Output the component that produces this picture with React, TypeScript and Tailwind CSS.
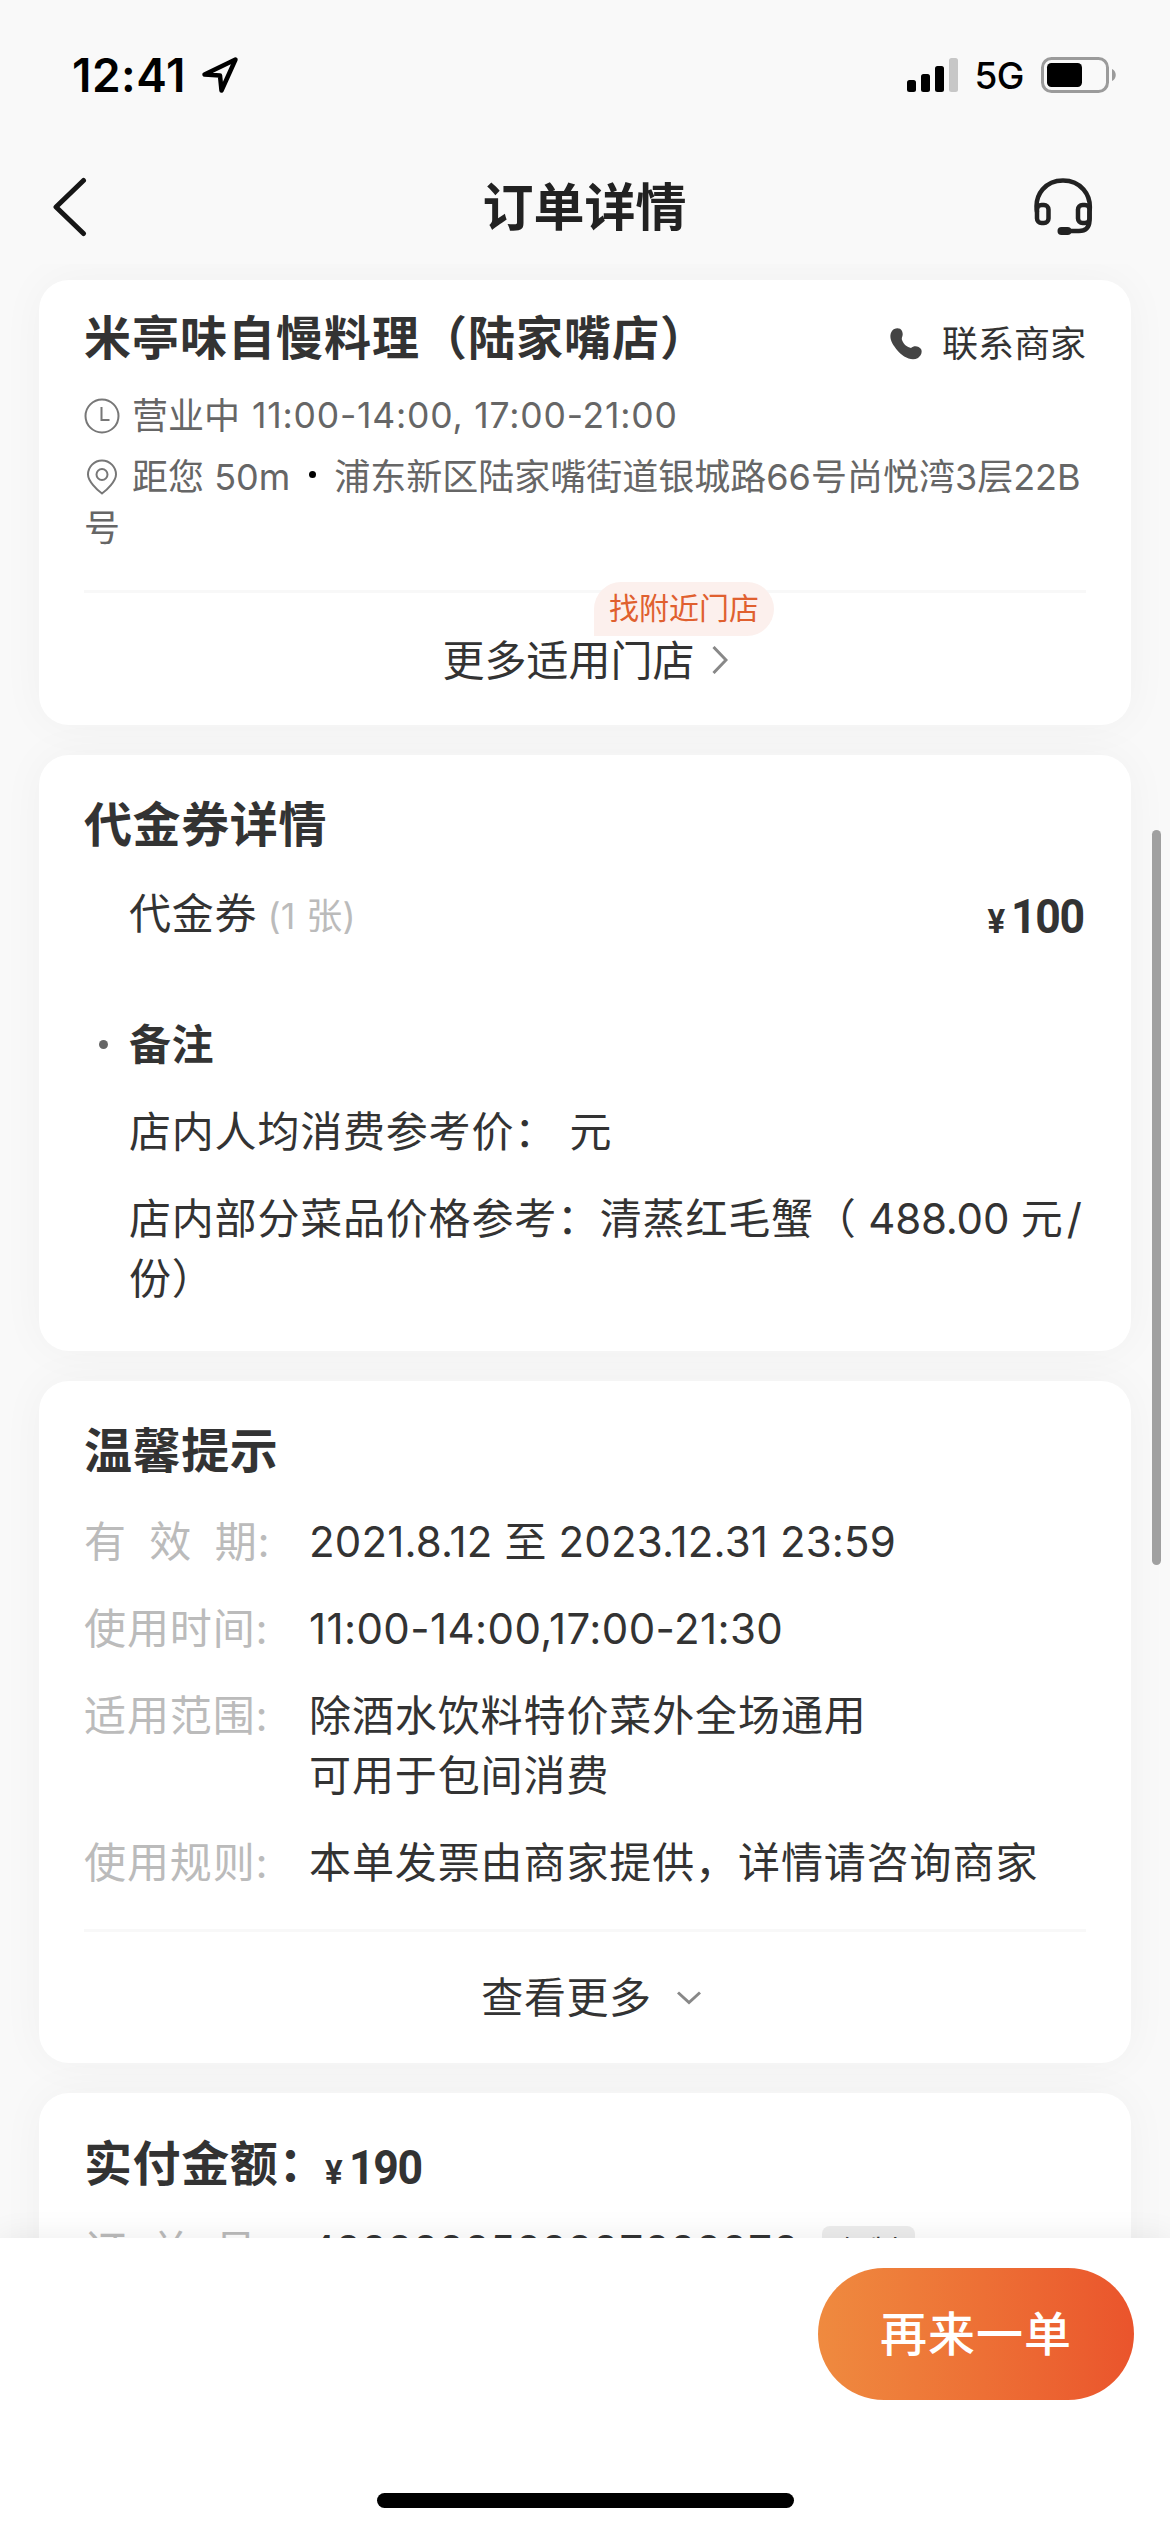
import type { ReactNode } from "react";

interface InfoRow {
  label: string;
  lines: string[];
  valueClass?: string;
}

const tips: InfoRow[] = [
  { label: "有  效  期:", lines: ["2021.8.12 至 2023.12.31 23:59"], valueClass: "tracking-[0.15px]" },
  { label: "使用时间:", lines: ["11:00-14:00,17:00-21:30"], valueClass: "tracking-[0.4px]" },
  { label: "适用范围:", lines: ["除酒水饮料特价菜外全场通用", "可用于包间消费"] },
  { label: "使用规则:", lines: ["本单发票由商家提供，详情请咨询商家"] },
];

function StatusBar() {
  return (
    <div className="flex h-[150px] items-center justify-between pl-[72px] pr-[53px] text-black">
      <div className="flex items-center gap-[15px]">
        <span className="text-[46px] font-semibold leading-none tracking-[0.5px]">12:41</span>
        <svg width="38" height="38" viewBox="0 0 38 38" fill="none" stroke="currentColor" strokeWidth="4.5" strokeLinejoin="round">
          <path d="M34.5 3.5 3.5 18.5 19 19.5 20.5 34.5Z" />
        </svg>
      </div>
      <div className="flex items-center">
        <svg width="52" height="34" viewBox="0 0 52 34">
          <rect x="0" y="22" width="9" height="12" rx="2.5" />
          <rect x="14" y="16" width="9" height="18" rx="2.5" />
          <rect x="28" y="8" width="9" height="26" rx="2.5" />
          <rect x="42" y="0" width="9" height="34" rx="2.5" fill="#c7c7c7" />
        </svg>
        <span className="ml-[15px] text-[37px] font-medium leading-none tracking-[-0.5px]">5G</span>
        <svg className="ml-[17px]" width="76" height="36" viewBox="0 0 76 36">
          <rect x="1.5" y="1.5" width="65" height="33" rx="9" fill="none" stroke="#9b9b9b" strokeWidth="3" />
          <rect x="6" y="6" width="35" height="24" rx="4.5" />
          <path d="M71 12c5 2 5 10 0 12z" fill="#9b9b9b" />
        </svg>
      </div>
    </div>
  );
}

function Header() {
  return (
    <div className="flex h-[114px] items-center justify-between pl-[52px] pr-[77px]">
      <svg width="36" height="60" viewBox="0 0 36 60" fill="none" stroke="#161616" strokeWidth="5" strokeLinecap="round" strokeLinejoin="round">
        <path d="M31.5 3.5 4 30 31.5 56.5" />
      </svg>
      <h1 className="ml-[48px] text-[51px] font-bold leading-none text-[#222]">订单详情</h1>
      <svg width="60" height="60" viewBox="0 0 60 60" fill="none" stroke="#222" strokeWidth="4.5">
        <path d="M4 35C1 17 13 3.5 30 3.5S59 17 56.5 35V44Q56 54 46 54H30" />
        <rect x="4" y="28" width="11.5" height="18" rx="4.5" />
        <rect x="45" y="28" width="11.5" height="18" rx="4.5" />
        <path d="M28.5 54h6" strokeWidth="8" strokeLinecap="round" />
      </svg>
    </div>
  );
}

function Card({ className, children }: { className?: string; children: ReactNode }) {
  return (
    <section className={`shrink-0 rounded-[30px] bg-white px-[45px] shadow-[0_0_45px_rgba(0,0,0,0.04)] ${className ?? ""}`}>
      {children}
    </section>
  );
}

function Price({ value }: { value: number }) {
  return (
    <span className="mt-[7px] flex items-baseline gap-[6px] font-['Roboto'] font-bold text-[#333]">
      <span className="text-[33px]">¥</span>
      <span className="-mr-[5px] inline-block origin-left scale-x-[0.91] text-[49px] tracking-[-1.5px]">{value}</span>
    </span>
  );
}

function StoreCard() {
  return (
    <Card className="h-[445px] pt-[29px]">
      <div className="flex items-start justify-between">
        <h2 className="text-[47px] font-bold leading-[58px] tracking-[1px] text-[#333]">米亭味自慢料理（陆家嘴店）</h2>
        <div className="mt-[11px] flex items-center gap-5 text-[#333]">
          <svg width="32" height="32" viewBox="0 0 32 32" fill="#444">
            <path d="M2 3C4 0 10-1 12 3 14 8 11 9 12 12 14 17 17 19 21 20 24 17 29 18 31 21 33 25 30 28 28 30 21 34 12 28 7 22 2 16-2 9 2 3Z" />
          </svg>
          <span className="text-[36px] leading-[48px]">联系商家</span>
        </div>
      </div>
      <div className="mt-[22px] flex h-[51px] items-center text-[36px] text-[#666]">
        <svg className="mr-3" width="36" height="36" viewBox="0 0 36 36" fill="none" stroke="#777" strokeWidth="2">
          <circle cx="18" cy="18" r="16.5" />
          <path d="M17.5 9v13h8" />
        </svg>
        <span>营业中</span>
        <span className="ml-[12px] text-[35.5px] tracking-[0.8px]">11:00-14:00, 17:00-21:00</span>
      </div>
      <p className="mt-[11px] text-[36px] leading-[51px] text-[#666]">
        <svg className="mr-3 inline-block align-[-5px]" width="36" height="36" viewBox="0 0 36 36" fill="none" stroke="#777" strokeWidth="2">
          <path d="M18 34.5C13 31 4 22 4 15.5a14 14 0 0 1 28 0C32 22 23 31 18 34.5Z" />
          <circle cx="18" cy="15.5" r="5.5" />
        </svg>
        距您 50m
        <span className="ml-[19px] mr-[18px] inline-block size-[7px] rounded-full bg-black align-[12px]" />
        浦东新区陆家嘴街道银城路66号尚悦湾3层22B号
      </p>
      <div className="relative mt-[36px] h-[134px] border-t-3 border-[#f8f8f8]">
        <div className="flex h-full items-center justify-center gap-[17px] pt-[3px]">
          <span className="text-[42px] text-[#333]">更多适用门店</span>
          <svg width="16" height="28" viewBox="0 0 16 28" fill="none" stroke="#888" strokeWidth="3">
            <path d="M1.5 1 14 14 1.5 27" />
          </svg>
        </div>
        <span className="absolute left-[510px] top-[-11px] flex h-[54px] w-[180px] items-center justify-center rounded-[27px] rounded-bl-none bg-[#fcf0ed] pb-[2px] text-[30px] text-[#e0602f]">
          找附近门店
        </span>
      </div>
    </Card>
  );
}

function VoucherCard() {
  return (
    <Card className="h-[596px] pt-[40px]">
      <h2 className="text-[48px] font-bold leading-[60px] tracking-[0.6px] text-[#333]">代金券详情</h2>
      <div className="mt-[28px] flex h-[60px] items-center justify-between pl-[45px]">
        <div className="text-[42px] tracking-[0.8px] text-[#333]">
          代金券
          <span className="ml-[10px] text-[36px] tracking-[0.3px] text-[#bbb]">(1 张)</span>
        </div>
        <Price value={100} />
      </div>
      <div className="mt-[71px] flex h-[60px] items-center">
        <span className="ml-[15px] size-[9px] rounded-full bg-[#666]" />
        <span className="ml-[21px] text-[42px] font-bold tracking-[0.6px] text-[#333]">备注</span>
      </div>
      <div className="mt-[28px] flex flex-col gap-[27px] whitespace-nowrap pl-[45px] text-[42px] leading-[60px] tracking-[0.8px] text-[#333]">
        <p className="whitespace-pre">店内人均消费参考价： 元</p>
        <p>
          店内部分菜品价格参考：清蒸红毛蟹（<span className="tracking-[-0.2px]"> 488.00 </span>
          <span className="tracking-[4px]">元</span>/
          <br />
          份）
        </p>
      </div>
    </Card>
  );
}

function TipsCard() {
  return (
    <Card className="h-[682px] pt-[40px]">
      <h2 className="text-[48px] font-bold leading-[60px] tracking-[0.6px] text-[#333]">温馨提示</h2>
      <dl className="mt-[31px] flex flex-col gap-[27px] text-[42px] leading-[60px] tracking-[0.9px]">
        {tips.map((row) => (
          <div key={row.label} className="flex">
            <dt className="w-[225px] shrink-0 whitespace-pre text-[#bbb] [word-spacing:-1.5px]">{row.label}</dt>
            <dd className={`text-[#333] ${row.valueClass ?? ""}`}>
              {row.lines.map((line) => (
                <div key={line}>{line}</div>
              ))}
            </dd>
          </div>
        ))}
      </dl>
      <div className="mt-[36px] flex h-[134px] items-center justify-center gap-[25px] border-t-3 border-[#f8f8f8] pl-[12px]">
        <span className="text-[42px] tracking-[0.6px] text-[#333]">查看更多</span>
        <svg width="24" height="14" viewBox="0 0 24 14" fill="none" stroke="#888" strokeWidth="3">
          <path d="M1 1.5 12 11.5 23 1.5" />
        </svg>
      </div>
    </Card>
  );
}

function PaymentCard() {
  return (
    <Card className="h-[300px] pt-[41px]">
      <div className="flex h-[60px] items-center">
        <h2 className="w-[241px] text-[48px] font-bold tracking-[0.6px] whitespace-nowrap text-[#333]">实付金额：</h2>
        <Price value={190} />
      </div>
      <div className="mt-[27px] flex items-center text-[42px] leading-[60px] tracking-[0.9px]">
        <span className="w-[225px] shrink-0 whitespace-pre text-[#bbb] [word-spacing:-1.5px]">订  单  号:</span>
        <span className="w-[513px] tabular-nums tracking-[-1.5px] text-[#333]">4888888588887888878</span>
        <span className="flex h-[50px] w-[93px] items-center justify-center rounded-lg bg-[#ededed] text-[30px] tracking-normal text-[#333]">
          复制
        </span>
      </div>
    </Card>
  );
}

export default function App() {
  return (
    <div
      lang="zh-CN"
      className="relative flex h-[2532px] w-[1170px] flex-col overflow-hidden bg-[#f9f9f9] font-['Inter','Noto_Sans_CJK_SC',sans-serif]"
    >
      <StatusBar />
      <Header />

      <main className="flex min-h-0 flex-1 flex-col gap-[30px] overflow-hidden px-[39px] pt-[16px]">
        <StoreCard />
        <VoucherCard />
        <TipsCard />
        <PaymentCard />
      </main>

      {/* Scroll indicator */}
      <div className="absolute right-[9px] top-[830px] h-[735px] w-[9px] rounded-full bg-[#a0a0a0]" />

      {/* Bottom action bar */}
      <footer className="relative flex h-[294px] shrink-0 flex-col justify-between bg-white pb-6 pt-[30px] shadow-[0_0_30px_rgba(0,0,0,0.08)]">
        <button className="mr-[36px] h-[132px] w-[316px] self-end rounded-full bg-linear-to-r from-[#ef8a3f] to-[#ea542c] text-[47px] font-medium tracking-[1px] text-white">
          再来一单
        </button>
        <div className="h-[15px] w-[417px] self-center rounded-full bg-black" />
      </footer>
    </div>
  );
}
